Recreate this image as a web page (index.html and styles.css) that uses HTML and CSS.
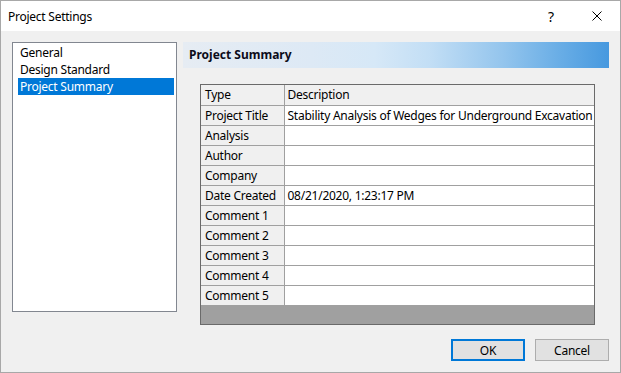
FILE: index.html
```html
<!DOCTYPE html>
<html>
<head>
<meta charset="utf-8">
<link rel="stylesheet" href="styles.css">
</head>
<body>
<div class="window">
  <div class="titlebar">
    <span class="title">Project Settings</span>
    <span class="tb-btn help">?</span>
    <span class="tb-btn close">
      <svg width="10" height="10" viewBox="0 0 10 10"><path d="M0.5 0.5 L9.5 9.5 M9.5 0.5 L0.5 9.5" stroke="#000" stroke-width="1" fill="none"/></svg>
    </span>
  </div>
  <div class="main">
    <div class="list">
      <div class="item">General</div>
      <div class="item">Design Standard</div>
      <div class="item selected">Project Summary</div>
    </div>
    <div class="right">
      <div class="band">Project Summary</div>
      <div class="tablebox">
        <table class="grid">
          <colgroup><col class="c1"><col class="c2"></colgroup>
          <tr class="head"><td>Type</td><td>Description</td></tr>
          <tr><td>Project Title</td><td>Stability Analysis of Wedges for Underground Excavation</td></tr>
          <tr><td>Analysis</td><td></td></tr>
          <tr><td>Author</td><td></td></tr>
          <tr><td>Company</td><td></td></tr>
          <tr><td>Date Created</td><td>08/21/2020, 1:23:17 PM</td></tr>
          <tr><td>Comment 1</td><td></td></tr>
          <tr><td>Comment 2</td><td></td></tr>
          <tr><td>Comment 3</td><td></td></tr>
          <tr><td>Comment 4</td><td></td></tr>
          <tr><td>Comment 5</td><td></td></tr>
        </table>
      </div>
    </div>
  </div>
  <div class="footer">
    <button class="btn default">OK</button>
    <button class="btn">Cancel</button>
  </div>
</div>
</body>
</html>
```
FILE: styles.css
```css
* { box-sizing: border-box; }
html, body { margin: 0; padding: 0; }
body {
  font-family: "Noto Sans", "Open Sans", sans-serif;
  font-size: 12px;
  letter-spacing: -0.25px;
  color: #000;
  background: #f0f0f0;
}
.window {
  width: 621px;
  height: 373px;
  border: 1px solid #a8a8a8;
  background: #f0f0f0;
  display: flex;
  flex-direction: column;
  overflow: hidden;
}
.titlebar {
  height: 30px;
  flex: none;
  background: #fff;
  display: flex;
  align-items: center;
  padding-left: 7px;
}
.title { flex: 1; font-size: 12px; }
.tb-btn {
  width: 46px;
  height: 30px;
  display: flex;
  align-items: center;
  justify-content: center;
}
.help { font-size: 14px; padding-top: 1px; }
.close svg { display: block; }
.main {
  display: flex;
  align-items: flex-start;
  padding: 11px 0 0 11px;
}
.list {
  width: 165px;
  height: 270px;
  border: 1px solid #828790;
  background: #fff;
  padding: 1px 2px 0 5px;
}
.item {
  height: 17px;
  line-height: 17px;
  padding-left: 2px;
  white-space: nowrap;
}
.item.selected { background: #0078d7; color: #fff; }
.right {
  margin-left: 6px;
  width: 426px;
}
.band {
  height: 26px;
  line-height: 26px;
  padding-left: 6px;
  font-weight: bold;
  font-size: 12px;
  letter-spacing: 0;
  color: #0c0c1a;
  background: linear-gradient(to right, #e6ecf3 0%, #dde9f5 30%, #d6e8f7 45%, #c2def5 58%, #94c5ed 75%, #6aaee6 88%, #4799df 100%);
}
.tablebox {
  margin: 16px 0 0 17px;
  width: 395px;
  height: 241px;
  border: 1px solid #6a6a6a;
  background: #a0a0a0;
}
.grid {
  width: 100%;
  border-collapse: collapse;
  table-layout: fixed;
}
.grid col.c1 { width: 83px; }
.grid td {
  height: 20px;
  padding: 0 0 0 4px;
  border-right: 1px solid #a0a0a0;
  border-bottom: 1px solid #a0a0a0;
  background: #fff;
  white-space: nowrap;
  overflow: hidden;
  line-height: 19px;
}
.grid td:first-child { background: #f0f0f0; padding-left: 4px; }
.grid td:last-child { border-right: none; padding-left: 3px; }
.grid tr.head td { background: #f0f0f0; }
.footer {
  margin-top: auto;
  display: flex;
  justify-content: flex-end;
  gap: 10px;
  padding: 0 11px 11px 0;
}
.btn {
  width: 74px;
  height: 22px;
  background: #e1e1e1;
  border: 1px solid #adadad;
  font-family: "Noto Sans", "Open Sans", sans-serif;
  font-size: 12px;
  letter-spacing: -0.25px;
  color: #000;
  padding: 0;
}
.btn.default { border: 2px solid #0078d7; }
```
